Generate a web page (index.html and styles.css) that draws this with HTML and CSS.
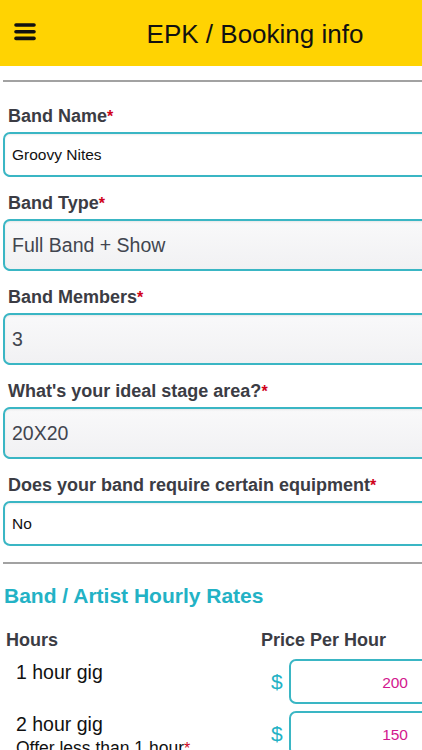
FILE: index.html
```html
<!DOCTYPE html>
<html lang="en">
<head>
    <meta charset="UTF-8">
    <meta name="viewport" content="width=device-width, initial-scale=1.0">
    <title>EPK / Booking info</title>
    <link rel="stylesheet" href="styles.css">
</head>
<body>
    <header class="topbar">
        <button class="menu-btn" title="Menu">
            <svg width="22" height="19" viewBox="0 0 22 19">
                <g stroke="#111" stroke-width="3.6" stroke-linecap="round">
                    <line x1="2" y1="2" x2="20" y2="2"/>
                    <line x1="2" y1="8.7" x2="20" y2="8.7"/>
                    <line x1="2" y1="15.4" x2="20" y2="15.4"/>
                </g>
            </svg>
        </button>
        <h1 class="title">EPK / Booking info</h1>
    </header>

    <div class="form">
        <div class="rule rule-top"></div>

        <div class="field">
            <label class="label">Band Name<span class="req">*</span></label>
            <input class="input" type="text" value="Groovy Nites">
        </div>

        <div class="field">
            <label class="label">Band Type<span class="req">*</span></label>
            <input class="input input-gray" type="text" value="Full Band + Show">
        </div>

        <div class="field">
            <label class="label">Band Members<span class="req">*</span></label>
            <input class="input input-gray" type="text" value="3">
        </div>

        <div class="field">
            <label class="label">What's your ideal stage area?<span class="req">*</span></label>
            <input class="input input-gray" type="text" value="20X20">
        </div>

        <div class="field">
            <label class="label">Does your band require certain equipment<span class="req">*</span></label>
            <input class="input" type="text" value="No">
        </div>

        <div class="rule rule-mid"></div>

        <h2 class="section-title">Band / Artist Hourly Rates</h2>

        <div class="rates-head">
            <span class="col-hours">Hours</span>
            <span class="col-price">Price Per Hour</span>
        </div>

        <div class="rate-row">
            <div class="rate-name">1 hour gig</div>
            <div class="rate-price">
                <span class="dollar">$</span>
                <input class="price-input" type="text" value="200">
            </div>
        </div>

        <div class="rate-row">
            <div class="rate-name">
                2 hour gig
                <div class="rate-note">Offer less than 1 hour<span class="req">*</span></div>
            </div>
            <div class="rate-price">
                <span class="dollar">$</span>
                <input class="price-input" type="text" value="150">
            </div>
        </div>
    </div>
</body>
</html>
```

FILE: styles.css
```css
:root {
    --yellow: #ffd302;
    --teal: #3ab6c4;
    --teal-text: #23b2c5;
    --label: #3b3c44;
    --red: #d0021b;
    --rule: #a2a2a2;
    --pink: #d3178e;
}

body {
    font-family: 'Liberation Sans', Arial, sans-serif;
    margin: 0;
    padding: 0;
    width: 422px;
    overflow: hidden;
    background-color: #ffffff;
    color: #111;
}

/* Верхняя панель */
.topbar {
    display: flex;
    align-items: center;
    height: 66px;
    background-color: var(--yellow);
}

.menu-btn {
    flex: 0 0 88px;
    display: flex;
    align-items: center;
    height: 66px;
    padding: 0 0 1px 14px;
    border: none;
    background: none;
    box-sizing: border-box;
}

.title {
    flex: 1;
    margin: 0;
    padding: 1px 0 0;
    font-size: 26px;
    font-weight: normal;
    line-height: 30px;
    text-align: center;
    color: #111;
}

/* Форма */
.form {
    padding: 0 0 0 3px;
}

.rule {
    height: 0;
    border-top: 2px solid var(--rule);
}

.rule-top {
    margin-top: 14px;
}

.rule-mid {
    margin-top: 16px;
}

.field {
    margin-top: 15px;
}

.rule-top + .field {
    margin-top: 23px;
}

.label {
    display: block;
    padding-left: 5px;
    margin-bottom: 5px;
    font-size: 18px;
    line-height: 22px;
    font-weight: bold;
    color: var(--label);
}

.req {
    color: var(--red);
    font-size: 16px;
    line-height: 1;
}

.input {
    display: block;
    width: 450px;
    height: 45px;
    padding: 0 7px;
    border: 2px solid var(--teal);
    border-radius: 7px;
    background-color: #ffffff;
    box-shadow: inset 0 1px 2px rgba(0, 0, 0, 0.08);
    box-sizing: border-box;
    font-family: 'Liberation Sans', Arial, sans-serif;
    font-size: 15.5px;
    color: #111;
    outline: none;
}

.input-gray {
    height: 52px;
    background: linear-gradient(#f9f9fa, #f1f1f3);
    font-size: 19.5px;
    color: #41454f;
}

/* Тарифы */
.section-title {
    margin: 20px 0 0 1px;
    font-size: 21px;
    line-height: 24px;
    font-weight: bold;
    color: var(--teal-text);
}

.rates-head {
    display: flex;
    margin-top: 21px;
    font-size: 18px;
    line-height: 22px;
    font-weight: bold;
    color: var(--label);
}

.col-hours {
    flex: 0 0 255px;
    padding-left: 3px;
}

.rate-row {
    display: flex;
    margin-top: 8px;
}

.rate-row + .rate-row {
    margin-top: 7px;
}

.rate-name {
    flex: 0 0 245px;
    padding: 2px 0 0 13px;
    font-size: 19.5px;
    line-height: 23px;
    color: #111;
}

.rate-note {
    margin-top: 2px;
    font-size: 17.5px;
    line-height: 20px;
}

.rate-price {
    display: flex;
    align-items: center;
    height: 45px;
}

.dollar {
    flex: 0 0 18px;
    padding-left: 10px;
    font-size: 21px;
    color: var(--teal-text);
}

.price-input {
    width: 150px;
    height: 45px;
    padding: 3px 29px 0 0;
    border: 2px solid var(--teal);
    border-radius: 7px;
    background-color: #ffffff;
    box-sizing: border-box;
    font-family: 'Liberation Sans', Arial, sans-serif;
    font-size: 15.5px;
    text-align: right;
    color: var(--pink);
    outline: none;
}
```
